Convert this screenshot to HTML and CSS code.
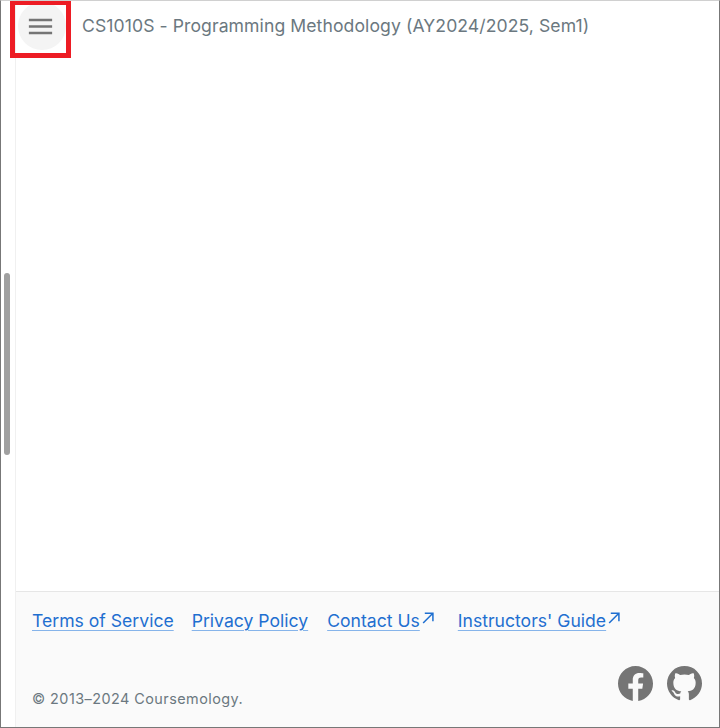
FILE: index.html
```html
<!DOCTYPE html>
<html lang="en">
<head>
<meta charset="utf-8">
<title>Coursemology</title>
<link rel="stylesheet" href="styles.css">
</head>
<body>
<div class="window">
  <aside class="rail"><div class="thumb"></div></aside>
  <div class="main">
    <header class="topbar">
      <button class="menu-btn" aria-label="Menu">
        <svg class="menu-icon" viewBox="0 0 24 24"><path d="M3 18h18v-2H3v2zm0-5h18v-2H3v2zm0-7v2h18V6H3z"/></svg>
      </button>
      <h1 class="course-title">CS1010S - Programming Methodology (AY2024/2025, Sem1)</h1>
    </header>
    <div class="content"></div>
    <footer class="footer">
      <nav class="links">
        <a class="link" href="#">Terms of Service</a>
        <a class="link" href="#">Privacy Policy</a>
        <span class="ext"><a class="link" href="#">Contact Us</a><svg class="arrow" viewBox="0 0 12 12"><path d="M2 11 10.5 2.5M3.5 2H11V9.5"/></svg></span>
        <span class="ext"><a class="link" href="#">Instructors' Guide</a><svg class="arrow" viewBox="0 0 12 12"><path d="M2 11 10.5 2.5M3.5 2H11V9.5"/></svg></span>
      </nav>
      <div class="bottom">
        <span class="copyright">© 2013–2024 Coursemology.</span>
        <div class="social">
          <svg class="social-icon" viewBox="2 2 20 20"><path d="M12 2.04c-5.5 0-10 4.49-10 10.02c0 5 3.66 9.15 8.44 9.9v-7H7.9v-2.9h2.54V9.85c0-2.51 1.49-3.89 3.78-3.89c1.09 0 2.23.19 2.23.19v2.47h-1.26c-1.24 0-1.63.77-1.63 1.56v1.88h2.78l-.45 2.9h-2.33v7a10 10 0 0 0 8.44-9.9c0-5.53-4.5-10.02-10-10.02Z"/></svg>
          <svg class="social-icon" viewBox="2 2 20 20"><path d="M12 2A10 10 0 0 0 2 12c0 4.42 2.87 8.17 6.84 9.5c.5.08.66-.23.66-.5v-1.69c-2.77.6-3.36-1.34-3.36-1.34c-.46-1.16-1.11-1.47-1.11-1.47c-.91-.62.07-.6.07-.6c1 .07 1.53 1.03 1.53 1.03c.87 1.52 2.34 1.07 2.91.83c.09-.65.35-1.09.63-1.34c-2.22-.25-4.55-1.11-4.55-4.92c0-1.11.38-2 1.03-2.71c-.1-.25-.45-1.29.1-2.64c0 0 .84-.27 2.75 1.02c.79-.22 1.65-.33 2.5-.33s1.71.11 2.5.33c1.91-1.29 2.75-1.02 2.75-1.02c.55 1.35.2 2.39.1 2.64c.65.71 1.03 1.6 1.03 2.71c0 3.82-2.34 4.66-4.57 4.91c.36.31.69.92.69 1.85V21c0 .27.16.59.67.5C19.14 20.16 22 16.42 22 12A10 10 0 0 0 12 2Z"/></svg>
        </div>
      </div>
    </footer>
  </div>
  <div class="highlight"></div>
</div>
</body>
</html>
```
FILE: styles.css
```css
* { box-sizing: border-box; }
html, body { margin: 0; height: 100%; background: #fff; }
.window {
  position: relative;
  display: flex;
  width: 720px;
  height: 728px;
  overflow: hidden;
  border-top: 1px solid #d0d0d0;
  border-left: 1px solid #777;
  border-right: 1px solid #777;
  border-bottom: 1px solid #777;
  font-family: Inter, "Liberation Sans", sans-serif;
}
.rail {
  flex: none;
  width: 15px;
  padding: 272px 0 0 3px;
  border-right: 1px solid #f0f0f0;
}
.thumb { width: 6px; height: 182px; border-radius: 3px; background: #a0a0a0; }
.main { flex: 1; display: flex; flex-direction: column; min-width: 0; }
.topbar { display: flex; align-items: center; gap: 16px; padding: 0 0 0 2px; height: 50px; }
.menu-btn {
  flex: none;
  display: flex;
  align-items: center;
  justify-content: center;
  width: 48px;
  height: 48px;
  padding: 0 3px 0 0;
  border: 0;
  border-radius: 50%;
  background: #f4f4f4;
}
.menu-icon { flex: none; width: 31px; height: 31px; fill: #757575; }
.course-title { margin: 0 0 2px; font-size: 17.6px; letter-spacing: .08px; font-weight: 400; color: #6b7880; white-space: nowrap; }
.content { flex: 1; }
.footer { flex: none; height: 136px; padding: 16px 16px 0; background: #fafafa; border-top: 1px solid #e6e6e6; }
.links { display: flex; align-items: flex-start; gap: 18px; font-size: 17.6px; line-height: 26px; }
.link { color: #1f6fd0; text-decoration: underline; text-decoration-color: #86b4ea; text-decoration-thickness: 1px; text-underline-offset: 3px; }
.ext { display: flex; align-items: flex-start; margin-left: 1px; }
.ext + .ext { margin-left: 3px; }
.arrow { width: 13px; height: 13px; margin: 3px 3px 0 1px; fill: none; stroke: #1f6fd0; stroke-width: 1.4; }
.bottom { display: flex; justify-content: space-between; align-items: flex-end; margin-top: 32px; }
.copyright { font-size: 14.4px; color: #6b7880; letter-spacing: .46px; padding-bottom: 2px; }
.social { display: flex; gap: 14px; margin-right: 1px; margin-bottom: 8px; }
.social-icon { width: 35px; height: 35px; fill: #757575; }
.highlight { position: absolute; left: 9px; top: -1px; width: 61px; height: 58px; border: 5px solid #ed1c24; }
```
